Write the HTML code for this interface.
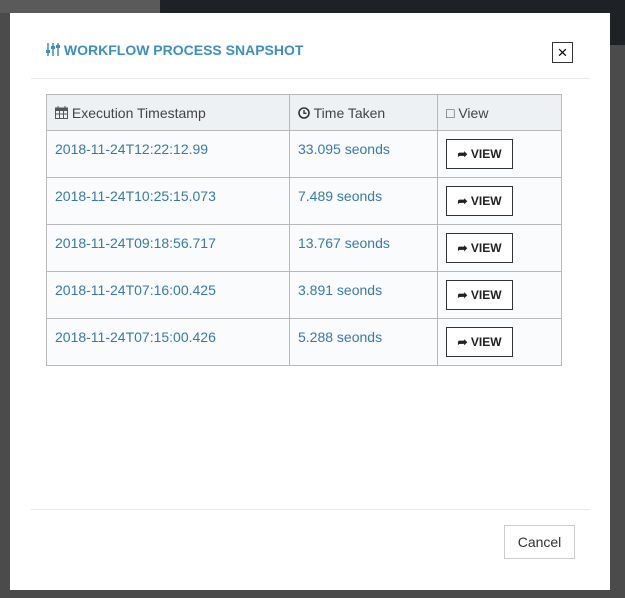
<!DOCTYPE html>
<html><head><style>
body{margin:0;width:625px;height:598px;background:#4b4b4b;position:relative;overflow:hidden;font-family:"Liberation Sans",sans-serif;}
.topbar{position:absolute;left:160px;top:0;width:465px;height:45px;background:#1e2125;}
.topbar2{position:absolute;left:0;top:0;width:160px;height:13px;background:#5a5a5a;}
.modal{position:absolute;left:10px;top:13px;width:600px;height:577px;background:#fff;}
.title{position:absolute;left:36px;top:29px;color:#3a8fc8;font-weight:bold;font-size:14px;}
.close{position:absolute;left:542px;top:29px;width:19px;height:19px;border:1px solid #333;font-size:17px;line-height:19px;text-align:center;color:#000;}
.hr{position:absolute;left:21px;width:559px;height:1px;background:#e8e8e8;}
table{position:absolute;left:36px;top:81px;border-collapse:collapse;font-size:14px;}
td,th{border:1px solid #b8b8b8;padding:0 8px;text-align:left;vertical-align:top;}
th{height:35px;vertical-align:middle;font-weight:normal;color:#444;background:#eef1f4;}
td{height:47px;background:#fafbfc;color:#337ab7;padding-top:10px;box-sizing:border-box;}
.btn{display:inline-block;margin-top:-2px;width:67px;height:30px;border:1px solid #333;box-sizing:border-box;color:#222;font-size:12px;font-weight:bold;line-height:28px;text-align:center;background:#fff;}
.cancel{position:absolute;left:494px;top:512px;width:69px;height:32px;border:1px solid #ccc;font-size:14px;color:#333;line-height:32px;text-align:center;}
</style></head><body>
<div class="topbar"></div><div class="topbar2"></div>
<div class="modal">
<div class="title"><svg width="14" height="13" viewBox="0 0 14 13" style="vertical-align:-1px"><g stroke="#3a8fc8" stroke-width="1.5" fill="none"><path d="M2 0v13M7 0v13M12 0v13"/></g><g fill="#3a8fc8"><rect x="0" y="7" width="4" height="3"/><rect x="5" y="3" width="4" height="3"/><rect x="10" y="2" width="4" height="3"/></g></svg> WORKFLOW PROCESS SNAPSHOT</div>
<div class="close">×</div>
<div class="hr" style="top:65px"></div>
<table>
<tr><th style="width:226px"><svg width="13" height="13" viewBox="0 0 13 13" style="vertical-align:-1px"><rect x="0.5" y="2" width="12" height="10.5" fill="none" stroke="#555"/><rect x="0.5" y="2" width="12" height="3" fill="#555"/><path d="M3 0v3M10 0v3M0.5 8h12M4.5 5v7.5M8.5 5v7.5" stroke="#555"/></svg> Execution Timestamp</th><th style="width:131px"><svg width="12" height="12" viewBox="0 0 12 12" style="vertical-align:-1px"><circle cx="6" cy="6" r="5" fill="none" stroke="#333" stroke-width="1.6"/><path d="M6 3v3.3h2.5" stroke="#333" stroke-width="1.4" fill="none"/></svg> Time Taken</th><th style="width:107px">&#9633; View</th></tr>
<tr><td>2018-11-24T12:22:12.99</td><td>33.095 seonds</td><td><span class="btn">&#10150; VIEW</span></td></tr>
<tr><td>2018-11-24T10:25:15.073</td><td>7.489 seonds</td><td><span class="btn">&#10150; VIEW</span></td></tr>
<tr><td>2018-11-24T09:18:56.717</td><td>13.767 seonds</td><td><span class="btn">&#10150; VIEW</span></td></tr>
<tr><td>2018-11-24T07:16:00.425</td><td>3.891 seonds</td><td><span class="btn">&#10150; VIEW</span></td></tr>
<tr><td>2018-11-24T07:15:00.426</td><td>5.288 seonds</td><td><span class="btn">&#10150; VIEW</span></td></tr>
</table>
<div class="hr" style="top:496px"></div>
<div class="cancel">Cancel</div>
</div>
</body></html>
